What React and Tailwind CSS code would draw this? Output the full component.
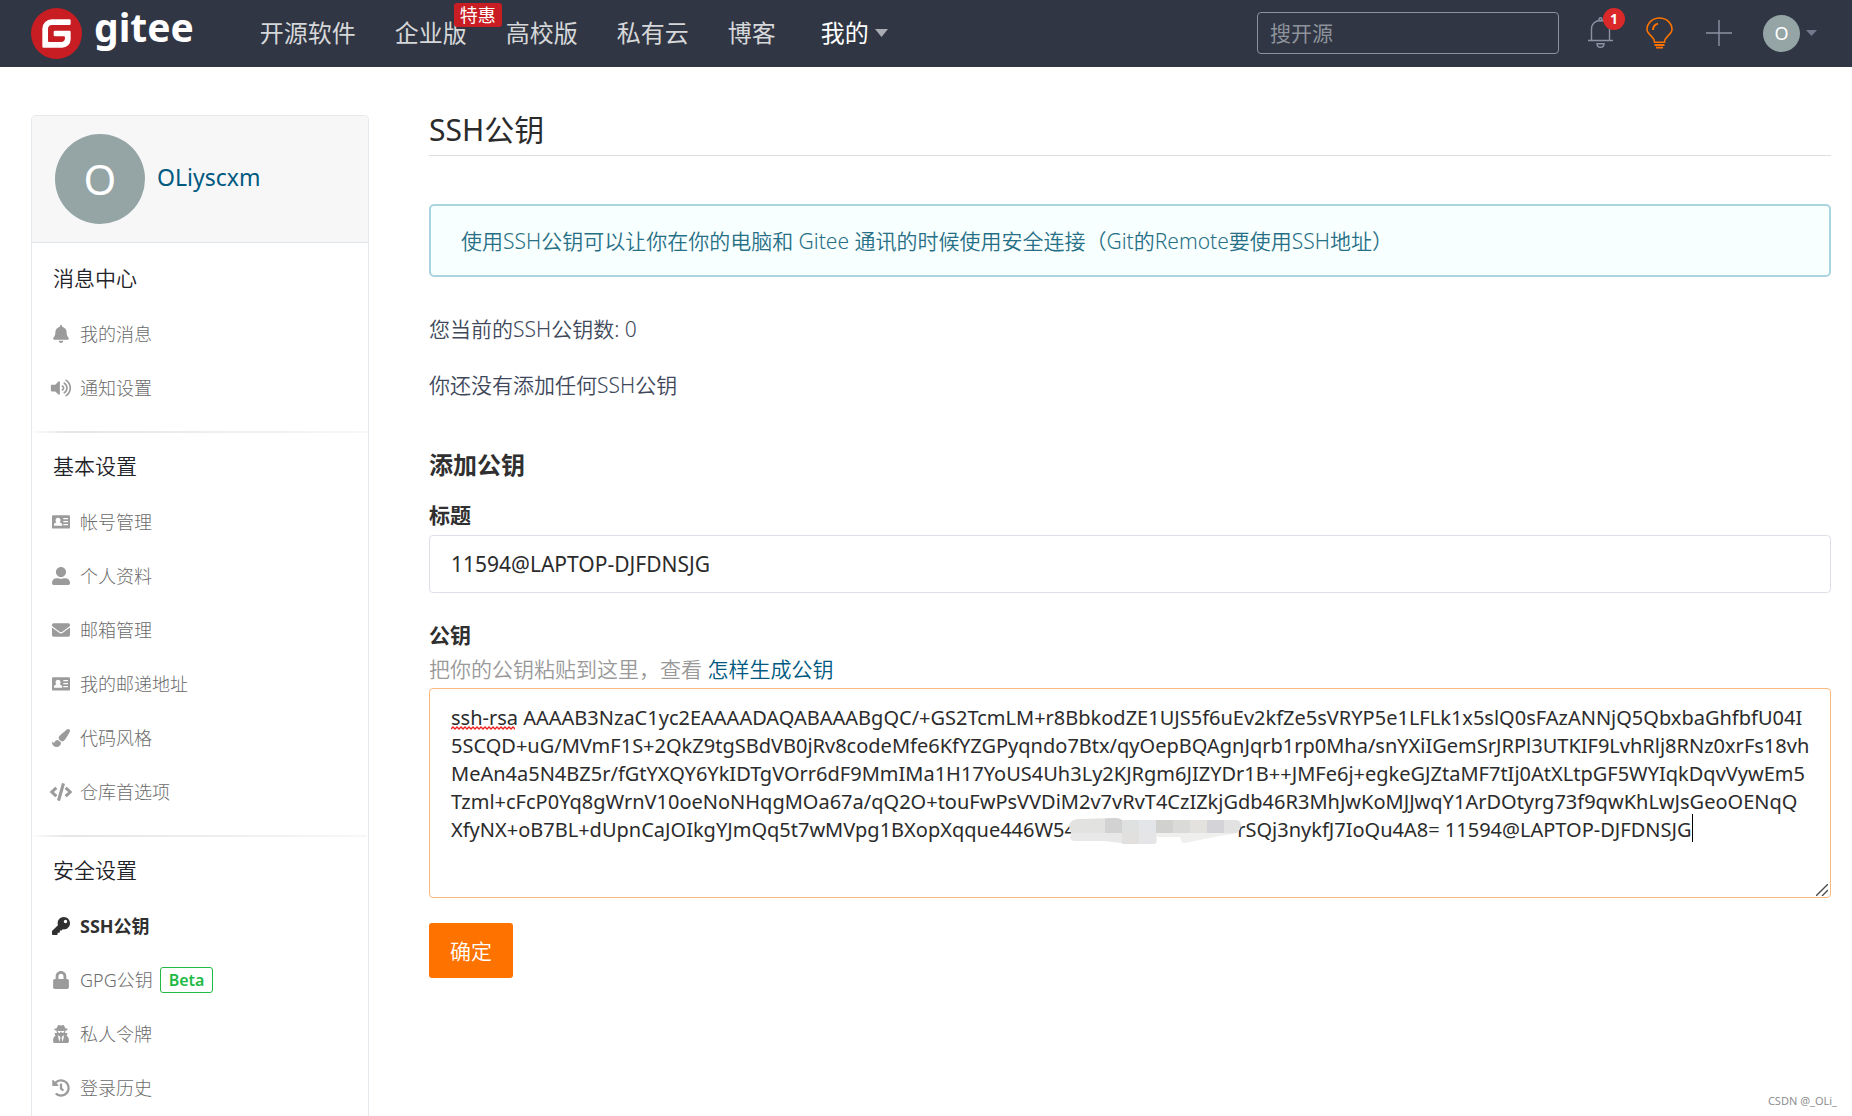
import React from "react";
import {
  FaBell,
  FaVolumeUp,
  FaUserAlt,
  FaEnvelope,
  FaPaintBrush,
  FaCode,
  FaKey,
  FaLock,
  FaUserSecret,
  FaHistory,
} from "react-icons/fa";

function CardIcon(props) {
  return (
    <svg viewBox="0 0 18 18" fill="currentColor" aria-hidden="true" {...props}>
      <path
        fillRule="evenodd"
        d="M1.2 2.2h15.6A1.2 1.2 0 0 1 18 3.400v11a1.200 1.200 0 0 1-1.200 1.200H1.200A1.200 1.200 0 0 1 0 14.400v-11a1.200 1.200 0 0 1 1.200-1.200zM6 4.700c-1.500 0-2.400 1.100-2.400 2.500 0 1 .4 1.900 1 2.400-1.500.3-2.600.9-2.600 2v1.100h8.200v-1.100c0-1.100-1.200-1.700-2.700-2 .6-.5 1-1.400 1-2.400 0-1.400-1-2.500-2.500-2.500zM11.300 5v1.300H16V5zm0 3v1.300H16V8zm0 3v1.300H16V11z"
      />
    </svg>
  );
}

const sections = [
  {
    title: "消息中心",
    items: [
      { icon: FaBell, label: "我的消息" },
      { icon: FaVolumeUp, label: "通知设置" },
    ],
  },
  {
    title: "基本设置",
    items: [
      { icon: CardIcon, label: "帐号管理" },
      { icon: FaUserAlt, label: "个人资料" },
      { icon: FaEnvelope, label: "邮箱管理" },
      { icon: CardIcon, label: "我的邮递地址" },
      { icon: FaPaintBrush, label: "代码风格" },
      { icon: FaCode, label: "仓库首选项" },
    ],
  },
  {
    title: "安全设置",
    items: [
      { icon: FaKey, label: "SSH公钥", active: true },
      { icon: FaLock, label: "GPG公钥", beta: true },
      { icon: FaUserSecret, label: "私人令牌" },
      { icon: FaHistory, label: "登录历史" },
    ],
  },
];

const publicKey = [
  "ssh-rsa AAAAB3NzaC1yc2EAAAADAQABAAABgQC/+GS2TcmLM+r8BbkodZE1UJS5f6uEv2kfZe5sVRYP5e1LFLk1x5slQ0sFAzANNjQ5QbxbaGhfbfU04I",
  "5SCQD+uG/MVmF1S+2QkZ9tgSBdVB0jRv8codeMfe6KfYZGPyqndo7Btx/qyOepBQAgnJqrb1rp0Mha/snYXiIGemSrJRPl3UTKIF9LvhRlj8RNz0xrFs18vh",
  "MeAn4a5N4BZ5r/fGtYXQY6YkIDTgVOrr6dF9MmIMa1H17YoUS4Uh3Ly2KJRgm6JIZYDr1B++JMFe6j+egkeGJZtaMF7tIj0AtXLtpGF5WYIqkDqvVywEm5",
  "Tzml+cFcP0Yq8gWrnV10oeNoNHqgMOa67a/qQ2O+touFwPsVVDiM2v7vRvT4CzIZkjGdb46R3MhJwKoMJJwqY1ArDOtyrg73f9qwKhLwJsGeoOENqQ",
  "XfyNX+oB7BL+dUpnCaJOIkgYJmQq5t7wMVpg1BXopXqque446W54" +
    "\u00a0".repeat(31) +
    "rSQj3nykfJ7IoQu4A8= 11594@LAPTOP-DJFDNSJG",
].join("\n");

function Header() {
  return (
    <header className="flex h-[67px] shrink-0 items-center bg-[#303643] pr-[35px] pb-px pl-[31px]">
      <a href="#home" aria-label="gitee" className="flex shrink-0 items-center gap-3">
        <svg viewBox="0 0 24 24" className="h-[51px] w-[51px]" aria-hidden="true">
          <circle cx="12" cy="12" r="11" fill="#fff" />
          <path
            fill="#c71d23"
            d="M11.984 0A12 12 0 0 0 0 12a12 12 0 0 0 12 12 12 12 0 0 0 12-12A12 12 0 0 0 12 0a12 12 0 0 0-.016 0zm6.09 5.333c.328 0 .593.266.592.593v1.482a.594.594 0 0 1-.593.592H9.777c-.982 0-1.778.796-1.778 1.778v5.63c0 .327.266.592.593.592h5.63c.982 0 1.778-.796 1.778-1.778v-.296a.593.593 0 0 0-.592-.593h-4.15a.592.592 0 0 1-.592-.592v-1.482a.593.593 0 0 1 .593-.592h6.815c.327 0 .593.265.593.592v3.408a4 4 0 0 1-4 4H5.926a.593.593 0 0 1-.593-.593V9.778a4.444 4.444 0 0 1 4.445-4.444h8.296Z"
          />
        </svg>
        <span className="pb-3 text-[39px] leading-[48px] font-bold text-white">gitee</span>
      </a>

      <nav className="ml-[66px] flex items-center gap-[39px] text-2xl leading-9 whitespace-nowrap text-[#d6d7d9]">
        <a href="#explore">开源软件</a>
        <a href="#enterprise" className="relative">
          企业版
          <span className="absolute -top-3 left-[59px] rounded-[3px] bg-[#c71d23] px-[6px] text-lg leading-6 text-white">
            特惠
          </span>
        </a>
        <a href="#education">高校版</a>
        <a href="#cloud">私有云</a>
        <a href="#blog">博客</a>
        <button type="button" className="ml-[6px] flex items-center gap-[6px] text-white">
          我的
          <svg viewBox="0 0 13 8" className="h-2 w-[13px]" fill="#a9acb3" aria-hidden="true">
            <path d="M0 0h13L6.500 8z" />
          </svg>
        </button>
      </nav>

      <div className="ml-auto flex items-center">
        <input
          type="search"
          aria-label="搜开源"
          placeholder="搜开源"
          className="h-[42px] w-[302px] rounded-[4px] border border-[#8c92a4] bg-transparent px-3 text-[21px] text-white placeholder:text-[#8d929b]"
        />
        <button type="button" aria-label="通知" className="relative ml-[29px]">
          <svg
            viewBox="0 0 25 32"
            className="h-8 w-[25px]"
            fill="none"
            stroke="#8c92a4"
            strokeWidth="1.4"
            aria-hidden="true"
          >
            <path d="M0 23.500h25M3.500 23.500V12C3.500 6.500 7.500 3.500 12.500 3.500S21.500 6.500 21.500 12v11.500" />
            <circle cx="12.500" cy="2.200" r="1.500" />
            <path d="M9 26.800h7c0 2.200-1.500 3.500-3.500 3.500S9 29 9 26.800z" />
          </svg>
          <span className="absolute -top-[9px] left-[15px] h-[22px] w-[22px] rounded-full bg-[#db2828] text-center text-sm leading-[22px] font-bold text-white">
            1
          </span>
        </button>
        <button type="button" aria-label="灵感" className="ml-[33px]">
          <svg
            viewBox="0 0 27 32"
            className="h-8 w-[27px]"
            fill="none"
            stroke="#fe7300"
            strokeWidth="1.6"
            aria-hidden="true"
          >
            <path d="M8.500 25.200c0-3.200-1.200-4.200-3.500-6.400C2.500 16.500 1 14.500 1 12.500 1 6 6.500 1 13.500 1S26 6 26 12.500c0 2-1.500 4-4 6.300-2.300 2.200-3.500 3.200-3.500 6.400z" />
            <path d="M7 13c0-3 1.800-5.600 5-6.400" strokeWidth="2" />
            <path d="M8.500 28h10M10 30.700h7" strokeWidth="1.800" />
          </svg>
        </button>
        <button type="button" aria-label="新建" className="ml-[33px]">
          <svg viewBox="0 0 26 26" className="h-[26px] w-[26px]" stroke="#8c92a4" strokeWidth="1.400" aria-hidden="true">
            <path d="M13 0v26M0 13h26" />
          </svg>
        </button>
        <button type="button" aria-label="账户" className="ml-[31px] flex items-center gap-[6px]">
          <span className="h-[37px] w-[37px] rounded-full bg-[#95a5a6] text-center text-lg leading-[37px] text-white">
            O
          </span>
          <svg viewBox="0 0 11 6" className="h-[6px] w-[11px]" fill="#747a8c" aria-hidden="true">
            <path d="M0 0h11L5.500 6z" />
          </svg>
        </button>
      </div>
    </header>
  );
}

function Sidebar() {
  return (
    <aside className="w-[338px] shrink-0 rounded-t-[5px] border border-b-0 border-[#e3e9ed]">
      <div className="mb-[2px] flex h-[127px] items-center gap-3 rounded-t-[4px] border-b border-[#dfe6ec] bg-[#f7f7f7] pl-[23px]">
        <span className="h-[90px] w-[90px] rounded-full bg-[#95a5a6] text-center text-[42px] leading-[90px] text-white">
          O
        </span>
        <a href="#profile" className="pb-1 text-[23px] text-[#005980]">
          OLiyscxm
        </a>
      </div>
      {sections.map((section, index) => (
        <section key={section.title}>
          {index > 0 && (
            <div className="mx-px mt-4 h-[2px] bg-linear-to-r from-[#fbfbfb] via-[#e6e6e6] via-10% to-[#f7f7f7]" />
          )}
          <h2 className="pt-[17px] pb-[13px] pl-[21px] text-[21px] leading-8 font-[350] text-[#1f2329]">
            {section.title}
          </h2>
          <ul>
            {section.items.map(({ icon: Icon, label, active, beta }) => (
              <li key={label}>
                <a
                  href="#settings"
                  className={
                    active
                      ? "flex h-[54px] items-center gap-[6px] pl-4 text-lg font-bold text-[#303030]"
                      : "flex h-[54px] items-center gap-[6px] pl-4 text-lg font-light text-[#6b6b6b]"
                  }
                >
                  <span
                    className={
                      active
                        ? "flex w-[26px] justify-center text-[#303030]"
                        : "flex w-[26px] justify-center text-[#9b9b9b]"
                    }
                  >
                    <Icon className="h-[18px] w-6 shrink-0" />
                  </span>
                  {label}
                  {beta && (
                    <span className="ml-px rounded-[3px] border border-[#21ba45] px-2 text-base leading-6 font-semibold text-[#21ba45]">
                      Beta
                    </span>
                  )}
                </a>
              </li>
            ))}
          </ul>
        </section>
      ))}
    </aside>
  );
}

function KeyField() {
  return (
    <div className="relative mt-[5px]">
      <textarea
        id="key-body"
        spellCheck={false}
        wrap="off"
        defaultValue={publicKey}
        className="block h-[210px] w-full resize-none overflow-hidden rounded-[4px] border border-[#fbb97f] bg-white px-[21px] py-[15px] text-xl leading-7 font-normal text-[#2b2b2b] outline-none"
      />
      <svg
        viewBox="0 0 64 4"
        className="pointer-events-none absolute top-[38px] left-[22px] h-1 w-16"
        fill="none"
        stroke="#f02020"
        strokeWidth="1.3"
        aria-hidden="true"
      >
        <path d="M0 3l2-2 2 2 2-2 2 2 2-2 2 2 2-2 2 2 2-2 2 2 2-2 2 2 2-2 2 2 2-2 2 2 2-2 2 2 2-2 2 2 2-2 2 2 2-2 2 2 2-2 2 2 2-2 2 2 2-2 2 2 2-2 2 2 2-2 2 2 2-2 2 2" />
      </svg>
      <svg
        viewBox="0 0 172 27"
        className="pointer-events-none absolute top-[130px] left-[640px] h-[27px] w-[172px]"
        aria-hidden="true"
      >
        <clipPath id="smudge">
          <path d="M0 8Q1 1 10 1L46 0Q51 0 53 2H168Q172 3 172 8 171 15 164 16L150 18 116 25Q112 25 111 19H88V24Q87 26 84 26H53V25L34 23H6Q2 23 1 20L2 15Z" />
        </clipPath>
        <g clipPath="url(#smudge)">
          <path fill="#e2e2e1" d="M0 0h36v15H0z" />
          <path fill="#d3d2d2" d="M36 0h17v15H36z" />
          <path fill="#dfe0e0" d="M53 0h17v15H53z" />
          <path fill="#e4e5e8" d="M70 0h17v15H70z" />
          <path fill="#d1d1d0" d="M87 0h17v15H87z" />
          <path fill="#dadad9" d="M104 0h17v15h-17z" />
          <path fill="#e3e2df" d="M121 0h17v15h-17z" />
          <path fill="#d4d4d8" d="M138 0h17v15h-17z" />
          <path fill="#e2e2e3" d="M155 0h17v15h-17z" />
          <path fill="#e8e8e8" d="M0 15h53v12H0z" />
          <path fill="#e1e0df" d="M53 15h17v12H53z" />
          <path fill="#e5e5e8" d="M70 15h17v12H70z" />
          <path fill="#efefee" d="M87 15h85v12H87z" />
        </g>
      </svg>
      <span className="pointer-events-none absolute top-[126px] left-[1263px] h-7 w-px bg-black" />
      <svg
        viewBox="0 0 12 12"
        className="pointer-events-none absolute right-[3px] bottom-[2px] h-3 w-3"
        stroke="#4a4a4a"
        strokeWidth="1.4"
        aria-hidden="true"
      >
        <path d="M0 12L12 0M6 12l6-6" />
      </svg>
    </div>
  );
}

function Main() {
  return (
    <main className="min-w-0 flex-1 pt-[43px] text-[21px] leading-7 font-[350] text-[#40485b]">
      <h1 className="border-b border-[#dfdfdf] pb-[5px] text-3xl leading-10 font-normal text-[#2b2b2b]">SSH公钥</h1>
      <p className="mt-12 rounded-[5px] border-2 border-[#a9d5de] bg-[#f8ffff] px-[30px] pt-[22px] pb-5 leading-[27px] text-[#276f86]">
        使用SSH公钥可以让你在你的电脑和 Gitee 通讯的时候使用安全连接（Git的Remote要使用SSH地址）
      </p>
      <p className="mt-[38px]">您当前的SSH公钥数: 0</p>
      <p className="mt-7">你还没有添加任何SSH公钥</p>

      <form onSubmit={(event) => event.preventDefault()}>
        <h2 className="mt-12 text-2xl leading-9 font-bold text-[#303030]">添加公钥</h2>
        <label htmlFor="key-title" className="mt-[18px] block font-bold text-[#303030]">
          标题
        </label>
        <input
          id="key-title"
          type="text"
          defaultValue="11594@LAPTOP-DJFDNSJG"
          className="mt-[6px] block h-[58px] w-full rounded-[4px] border border-[#dde0e6] px-[21px] font-normal text-[#2b2b2b] outline-none"
        />
        <label htmlFor="key-body" className="mt-7 block font-bold text-[#303030]">
          公钥
        </label>
        <p className="mt-[6px] text-[#999]">
          把你的公钥粘贴到这里，查看{" "}
          <a href="#help" className="text-[#005980]">
            怎样生成公钥
          </a>
        </p>
        <KeyField />
        <button
          type="submit"
          className="mt-[25px] h-[55px] w-[84px] rounded-[3px] bg-[#fe7300] text-[21px] text-white"
        >
          确定
        </button>
      </form>
    </main>
  );
}

export default function App() {
  return (
    <div
      lang="zh-CN"
      className="relative flex min-h-screen flex-col bg-white font-['Noto_Sans','Noto_Sans_CJK_SC',sans-serif]"
    >
      <Header />
      <div className="flex flex-1 gap-[60px] pr-[21px] pl-[31px]">
        <div className="flex pt-12">
          <Sidebar />
        </div>
        <Main />
      </div>
      <span className="absolute right-[15px] bottom-[7px] text-[11px] leading-4 text-[#8f8f8f]">CSDN @_OLi_</span>
    </div>
  );
}
